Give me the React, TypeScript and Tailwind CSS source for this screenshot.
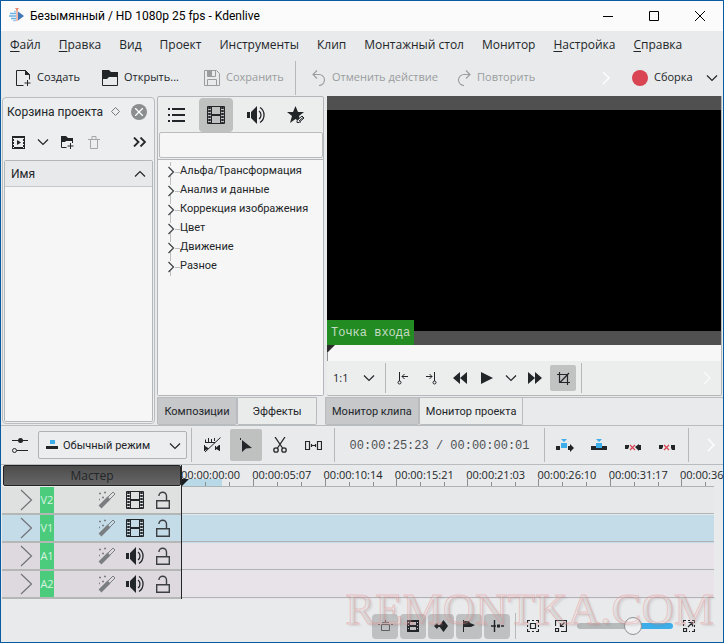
import { useState } from "react";
import type { ReactNode } from "react";

type IconProps = { w?: number; h?: number; children: ReactNode; className?: string };

function Icon({ w = 16, h = 16, children, className = "" }: IconProps) {
  return (
    <svg
      width={w}
      height={h}
      viewBox={`0 0 ${w} ${h}`}
      fill="none"
      stroke="currentColor"
      aria-hidden="true"
      className={`shrink-0 ${className}`}
    >
      {children}
    </svg>
  );
}

const ChevronDown = ({ className = "" }: { className?: string }) => (
  <Icon w={12} h={8} className={className}>
    <path d="M1 1.5l5 5 5-5" strokeWidth="1.2" />
  </Icon>
);

const ChevronRight = ({ className = "" }: { className?: string }) => (
  <Icon w={8} h={14} className={className}>
    <path d="M1 1l6 6-6 6" strokeWidth="1.4" />
  </Icon>
);

const AppLogo = () => (
  <Icon>
    <path d="M1 5.500h6M0 8h7M2 10.500h5" stroke="#6cb2e0" strokeWidth="1.600" />
    <path d="M5 3.500h2M4 12.500h3" stroke="#9fcbea" strokeWidth="1.400" />
    <path d="M9 3.500v9l6-4.500z" fill="#3f78b5" stroke="none" />
    <path d="M8 1v12" stroke="#eba08c" strokeWidth="1.400" />
    <path d="M6 0h4l-2 3z" fill="#e88b74" stroke="none" />
  </Icon>
);

const FileNew = () => (
  <Icon>
    <path d="M8.500 15.500h-7v-15h9l4 4v5M10.500.5v4h4" />
    <path d="M10 0l5 5h-5z" fill="currentColor" stroke="none" />
    <path d="M12.500 10v6M9.500 13h6" />
  </Icon>
);

const FolderOpen = () => (
  <Icon>
    <path d="M0 0h7l2 2h7v5H7L5 9H0z" fill="currentColor" stroke="none" />
    <path d="M.5 7v8.500h15V5" />
  </Icon>
);

const Save = () => (
  <Icon>
    <path d="M.5.5h12l3 3v12H.5z" />
    <path d="M3.500.5v6h8v-6M3.500 15.500v-6h9v6" />
    <path d="M4 1h4v5H4z" fill="currentColor" stroke="none" />
  </Icon>
);

const Undo = () => (
  <Icon w={14}>
    <path d="M1 4.500h6a5.500 5.500 0 0 1 0 11M5 .5l-4 4 4 4" strokeWidth="1.100" />
  </Icon>
);

const Redo = () => (
  <Icon w={14}>
    <path d="M13 4.500H7a5.500 5.500 0 0 0 0 11M9 .5l4 4-4 4" strokeWidth="1.100" />
  </Icon>
);

const ClipAdd = () => (
  <Icon w={13} h={13}>
    <path d="M1 1h11v11H1z" strokeWidth="2" />
    <path d="M1.500 2v10M11.500 2v10" stroke="#eceeef" strokeDasharray="1 2" />
    <path d="M5 4l4 2.500L5 9z" fill="currentColor" stroke="none" />
  </Icon>
);

const FolderAdd = () => (
  <Icon w={14} h={13}>
    <path d="M1 0h5l2 2h5v3H6L5 6H1z" fill="currentColor" stroke="none" />
    <path d="M1.500 1v10.500h5M12.500 3v4M10.500 7v6M7.500 10h6" />
  </Icon>
);

const Trash = () => (
  <Icon w={12} h={13}>
    <path d="M0 3.500h12M4 3V.5h4V3M2.500 4v8.500h7V4" />
  </Icon>
);

const DoubleChevron = () => (
  <Icon w={13} h={10}>
    <path d="M1 .5L5.500 5 1 9.500M7.500 .5L12 5 7.500 9.500" strokeWidth="1.800" />
  </Icon>
);

const ListIcon = () => (
  <Icon w={18}>
    <path d="M1 2h2M1 8h2M1 14h2" strokeWidth="2" />
    <path d="M5 2h13M5 8h13M5 14h13" strokeWidth="2" />
  </Icon>
);

const Film = () => (
  <Icon w={18} h={18}>
    <path d="M.5.5h17v17H.5z" />
    <path d="M2.500 1v16M15.500 1v16" strokeWidth="2.500" strokeDasharray="2 1" />
    <path d="M4.500.5v17M13.500.5v17" />
    <path d="M4 9h10" strokeWidth="2" />
  </Icon>
);

const FilmSmall = () => (
  <Icon w={12} h={12}>
    <path d="M1.500 0v12M10.500 0v12" strokeWidth="3" />
    <path d="M1.500 2v9M10.500 2v9" stroke="#bec0c1" strokeDasharray="1 2" />
    <path d="M3 1h6M3 6h6M3 11h6" strokeWidth="2" />
  </Icon>
);

const Speaker = () => (
  <Icon w={18} h={18}>
    <path d="M0 6h3v6H0zM4 6l6-6v18l-6-6z" fill="currentColor" stroke="none" />
    <path d="M12 5a5 5 0 0 1 0 8M13 1.500a9 9 0 0 1 0 15" strokeWidth="1.300" />
  </Icon>
);

const StarEdit = () => (
  <Icon w={20} h={18}>
    <path d="M8.500 0l2.500 6h6l-5 4 2 7-5.500-4L3 17l2-7L0 6h6z" fill="currentColor" stroke="none" />
    <path d="M10 16.500v-2l5-4.500 2 2-5 4.500z" fill="#eceded" />
    <path d="M12 15l4-3.500" />
  </Icon>
);

const MarkIn = () => (
  <Icon w={12} h={14}>
    <path d="M2.500 1v9M11 5.500H5M7.500 3L5 5.500 7.500 8" />
    <circle cx="2.500" cy="11.500" r="1.500" />
  </Icon>
);

const MarkOut = () => (
  <Icon w={12} h={14}>
    <path d="M9.500 1v9M1 5.500h6M4.500 3L7 5.500 4.500 8" />
    <circle cx="9.500" cy="11.500" r="1.500" />
  </Icon>
);

const Rewind = () => (
  <Icon w={14} h={12}>
    <path d="M7 0v12L0 6zM14 0v12L7 6z" fill="currentColor" stroke="none" />
  </Icon>
);

const Forward = () => (
  <Icon w={14} h={12}>
    <path d="M0 0v12l7-6zM7 0v12l7-6z" fill="currentColor" stroke="none" />
  </Icon>
);

const Play = () => (
  <Icon w={12} h={12}>
    <path d="M0 0v12l12-6z" fill="currentColor" stroke="none" />
  </Icon>
);

const Crop = () => (
  <Icon w={13} h={13}>
    <path d="M0 2.500h10.500V13M2.500 0v10.500H13M3 10.500L12 1" strokeWidth="1.200" />
  </Icon>
);

const Sliders = () => (
  <Icon>
    <path d="M0 3.500h16M5 13.500h11" />
    <circle cx="8.500" cy="3.500" r="2.500" fill="currentColor" stroke="none" />
    <circle cx="2.500" cy="13.500" r="2" />
  </Icon>
);

const ModeIcon = () => (
  <Icon w={12} h={9}>
    <path d="M4 0h5v4H4z" fill="#3daee9" stroke="none" />
    <path d="M0 6h12v3H0z" fill="currentColor" stroke="none" />
  </Icon>
);

const MixOff = () => (
  <Icon w={17} h={16}>
    <path d="M1.500 5V2.500M4.500 5V1M7.500 5V2M10.500 4V1M1 5.500h10M1 15L16.500.5" />
    <path d="M.5 8v6M15.500 8v6M11.500 9v4" />
    <path d="M1 9l4 2.500-4 2zM15 8l-4 3.500 4 2z" fill="currentColor" stroke="none" />
  </Icon>
);

const Pointer = () => (
  <Icon w={12} h={14}>
    <path d="M2 2l10 8-6 .5-4 3.500z" fill="currentColor" stroke="none" />
    <path d="M.5 0v2" />
  </Icon>
);

const Scissors = () => (
  <Icon w={16} h={16}>
    <path d="M3 0l7.500 11M13 0L5.500 11" strokeWidth="1.300" />
    <circle cx="4" cy="13" r="2.200" strokeWidth="1.300" />
    <circle cx="12" cy="13" r="2.200" strokeWidth="1.300" />
  </Icon>
);

const Spacer = () => (
  <Icon w={17} h={9}>
    <path d="M.5.5h4v8h-4zM12.500.5h4v8h-4zM7 4.500h3M6.500 3v3M10.500 3v3" strokeWidth="1.200" />
  </Icon>
);

const Insert = () => (
  <Icon w={18} h={13}>
    <path d="M0 7h4v4H0zM12 7h2V5l4 4-4 4v-2h-2z" fill="currentColor" stroke="none" />
    <path d="M5 4h6v5H5zM5 0h6L8 3z" fill="#3daee9" stroke="none" />
  </Icon>
);

const Overwrite = () => (
  <Icon w={16} h={13}>
    <path d="M0 7h16v4H0z" fill="currentColor" stroke="none" />
    <path d="M5 4h6v5H5zM5 0h6L8 3z" fill="#3daee9" stroke="none" />
  </Icon>
);

const Extract = () => (
  <Icon w={16} h={7}>
    <path d="M0 1h4v2L3 5H0zM10 3l4-3v1h2v5h-2v1z" fill="currentColor" stroke="none" />
    <path d="M5 1l5 5M10 1L5 6" stroke="#da4453" strokeWidth="1.200" />
  </Icon>
);

const Lift = () => (
  <Icon w={16} h={7}>
    <path d="M0 1h4v2L3 5H0zM12 1h4v5h-3l-1-2z" fill="currentColor" stroke="none" />
    <path d="M5 1l5 5M10 1L5 6" stroke="#da4453" strokeWidth="1.200" />
  </Icon>
);

const Wand = () => (
  <Icon w={18} h={18} className="text-[#7b7e81]">
    <path d="M2 16L11 7" strokeWidth="4" />
    <path d="M9.500 6.500L15 1l2 2-5.500 5.500z" />
    <path d="M1 2.500h2M6 1.500h2M4 6.500h2M1 8.500h1" strokeWidth="1.500" />
  </Icon>
);

const Unlock = () => (
  <Icon w={14} h={18} className="text-[#3d4043]">
    <path d="M.7 9.700h12.600v7.600H.7z" strokeWidth="1.400" />
    <path d="M10.500 9.500V5a3.800 3.800 0 0 0-7.600 0" strokeWidth="1.400" />
  </Icon>
);

const TrackBox = () => (
  <Icon w={15} h={12} className="text-[#5c6063]">
    <path d="M3.500 4.500h8v6h-8zM4 2.500h7M7.500 0v2M0 4.500h2M13 4.500h2" />
  </Icon>
);

const Keyframes = () => (
  <Icon w={14} h={12}>
    <path d="M9.500 0L14 6l-4.500 6L5 6zM3 3l2 3-2 3-3-3zM2 5h6v2H2z" fill="currentColor" stroke="none" />
  </Icon>
);

const Flag = () => (
  <Icon w={12} h={12}>
    <path d="M.5 0v12" />
    <path d="M1 1h5l1 2 5 2-4 2H1z" fill="currentColor" stroke="none" />
  </Icon>
);

const Snap = () => (
  <Icon w={13} h={12}>
    <path d="M3.500 0v12M0 6h5M10 6h3" strokeWidth="1.400" />
    <path d="M6 4.500h3v3H6z" fill="currentColor" stroke="none" />
  </Icon>
);

const FitZoom = () => (
  <Icon w={12} h={12}>
    <path
      d="M.5 3V.5H3M9 .5h2.500V3M11.500 9v2.500H9M3 11.500H.5V9M5 .5h2M5 11.500h2M.5 5v2M11.500 5v2"
      strokeWidth="1.200"
    />
    <path d="M3.500 3.500h5v5h-5z" strokeWidth="1.200" />
  </Icon>
);

const ZoomOut = () => (
  <Icon w={12} h={12}>
    <path d="M.5 6V.5h11v11H6M.5 8.500h3v3h-3zM9.500 2.500l-4 4M5.500 3v3.500H9" strokeWidth="1.200" />
  </Icon>
);

const ZoomIn = () => (
  <Icon w={12} h={12}>
    <path
      d="M.5 6V4M.5 2.500V.5H3M5 .5h2M9 .5h2.500V3M11.500 5v2M11.500 9v2.500H9M7 11.500H6M.5 8.500h3v3h-3zM5 7l4-4M5.500 2.500h4v4"
      strokeWidth="1.200"
    />
  </Icon>
);

const Separator = ({ className = "" }: { className?: string }) => (
  <div className={`w-px shrink-0 bg-[#b6b9bb] ${className}`} />
);

const menu: [string, boolean][] = [
  ["Файл", true],
  ["Правка", true],
  ["Вид", false],
  ["Проект", false],
  ["Инструменты", false],
  ["Клип", false],
  ["Монтажный стол", false],
  ["Монитор", false],
  ["Настройка", true],
  ["Справка", true],
];

const categories = [
  "Альфа/Трансформация",
  "Анализ и данные",
  "Коррекция изображения",
  "Цвет",
  "Движение",
  "Разное",
];

const tracks = [
  { name: "V2", video: true, head: "bg-[#dfe0e0]", body: "bg-[#e6e8e9]" },
  { name: "V1", video: true, head: "bg-[#c4dce8]", body: "bg-[#c4dce8]" },
  { name: "A1", video: false, head: "bg-[#ded9df]", body: "bg-[#e7e3e8]" },
  { name: "A2", video: false, head: "bg-[#ded9df]", body: "bg-[#e7e3e8]" },
];

const marks = [
  "00:00:00:00",
  "00:00:05:07",
  "00:00:10:14",
  "00:00:15:21",
  "00:00:21:03",
  "00:00:26:10",
  "00:00:31:17",
  "00:00:36",
];

function TitleBar() {
  return (
    <header className="flex h-[30px] items-center bg-[#fbfbfb] pl-2 font-[Roboto,sans-serif] text-[12px] text-black">
      <AppLogo />
      <h1 className="ml-[5px] grow whitespace-nowrap">Безымянный / HD 1080p 25 fps - Kdenlive</h1>
      <button aria-label="Свернуть" className="flex w-[46px] justify-center">
        <Icon w={10} h={10}>
          <path d="M0 5.500h10" />
        </Icon>
      </button>
      <button aria-label="Развернуть" className="flex w-[46px] justify-center">
        <Icon w={10} h={10}>
          <path d="M.5.5h9v9h-9z" />
        </Icon>
      </button>
      <button aria-label="Закрыть" className="flex w-[46px] justify-center">
        <Icon w={10} h={10}>
          <path d="M0 0l10 10M10 0L0 10" />
        </Icon>
      </button>
    </header>
  );
}

function MenuBar() {
  return (
    <nav className="flex h-[29px] items-center gap-[18px] pb-[2px] pl-[9px] text-[12px]">
      {menu.map(([label, mnemonic]) => (
        <button key={label} className="whitespace-nowrap">
          {mnemonic ? <span className="underline underline-offset-2">{label[0]}</span> : label[0]}
          {label.slice(1)}
        </button>
      ))}
    </nav>
  );
}

function MainToolbar() {
  return (
    <div className="flex h-[35px] items-center pl-[14px] text-[11px]">
      <button className="flex w-[87px] items-center gap-[6px] whitespace-nowrap">
        <FileNew /> Создать
      </button>
      <button className="flex w-[102px] items-center gap-[6px] whitespace-nowrap">
        <FolderOpen /> Открыть...
      </button>
      <button className="flex w-[91px] items-center gap-[6px] whitespace-nowrap text-[#9a9c9e]">
        <Save /> Сохранить
      </button>
      <Separator className="h-[34px]" />
      <button className="ml-4 flex w-[145px] items-center gap-[6px] whitespace-nowrap text-[#9a9c9e]">
        <Undo /> Отменить действие
      </button>
      <button className="flex items-center gap-[6px] whitespace-nowrap text-[#9a9c9e]">
        <Redo /> Повторить
      </button>
      <div className="grow" />
      <ChevronRight className="mr-[22px] text-white" />
      <button className="flex items-center gap-[6px] pr-[5px]">
        <span className="size-4 rounded-full bg-[#d94553]" />
        <span className="w-[46px] text-left">Сборка</span>
        <ChevronDown />
      </button>
    </div>
  );
}

function ProjectBin() {
  return (
    <section className="mr-[2px] flex w-[153px] shrink-0 flex-col rounded-sm border border-[#bbbec0] bg-[#eceeef] p-px font-[Roboto,sans-serif]">
      <div className="flex h-[25px] items-center pl-[3px] text-[12px]">
        <h2 className="grow whitespace-nowrap">Корзина проекта</h2>
        <button aria-label="Открепить панель" className="mr-[11px] text-[#777a7c]">
          <Icon w={9} h={9}>
            <path d="M4.500 .5l4 4-4 4-4-4z" />
          </Icon>
        </button>
        <button
          aria-label="Закрыть панель"
          className="mr-[6px] flex size-4 items-center justify-center rounded-full bg-[#8b8e90] text-white"
        >
          <Icon w={8} h={8}>
            <path d="M0 0l8 8M8 0L0 8" strokeWidth="1.300" />
          </Icon>
        </button>
      </div>
      <div className="flex h-9 items-center pl-2">
        <button aria-label="Добавить клип">
          <ClipAdd />
        </button>
        <button aria-label="Варианты добавления" className="ml-3">
          <ChevronDown />
        </button>
        <button aria-label="Создать папку" className="ml-[11px]">
          <FolderAdd />
        </button>
        <button aria-label="Удалить" className="ml-[14px] text-[#a4a7a9]">
          <Trash />
        </button>
        <div className="grow" />
        <button aria-label="Ещё" className="mr-[7px]">
          <DoubleChevron />
        </button>
      </div>
      <div className="flex grow flex-col rounded-xs border border-[#b4b7b9] bg-[#f6f6f6]">
        <button className="flex h-[26px] items-center justify-between border-b border-[#c6c9cb] bg-[#e8e9ea] px-[6px] text-[12px]">
          Имя
          <ChevronDown className="rotate-180" />
        </button>
      </div>
    </section>
  );
}

function Tab({ label, active, onClick }: { label: string; active: boolean; onClick: () => void }) {
  return (
    <button
      role="tab"
      aria-selected={active}
      onClick={onClick}
      className={`h-7 min-w-20 rounded-b-xs border border-[#b9bcbe] px-[6px] pt-[2px] font-[Roboto,sans-serif] text-[11px] whitespace-nowrap ${
        active ? "bg-[#c6c8ca]" : "bg-[#eaecec]"
      }`}
    >
      {label}
    </button>
  );
}

function Compositions() {
  const [tab, setTab] = useState(0);
  return (
    <section className="mr-[3px] flex w-[167px] shrink-0 flex-col">
      <div className="flex grow flex-col rounded-xs border border-[#b4b7b9] bg-[#eceeee]">
        <div className="flex h-[35px] items-center pl-px text-[#232629]">
          <button aria-label="Список" className="flex size-[34px] items-center justify-center">
            <ListIcon />
          </button>
          <button
            aria-label="Видео"
            className="ml-[6px] flex size-[34px] items-center justify-center rounded-sm bg-[#bfc1c1]"
          >
            <Film />
          </button>
          <button aria-label="Аудио" className="ml-[6px] flex size-[34px] items-center justify-center">
            <Speaker />
          </button>
          <button aria-label="Избранное" className="ml-[7px] flex size-[34px] items-center justify-center">
            <StarEdit />
          </button>
        </div>
        <input
          aria-label="Поиск"
          className="mb-px ml-px h-[26px] rounded-xs border border-[#b9bcbe] bg-[#f6f6f6] px-1 text-[11px] outline-none"
        />
        <ul className="grow border-t border-[#b4b7b9] bg-[#f6f6f6] pt-[2px] pl-[10px] font-[Roboto,sans-serif] text-[11px]">
          {categories.map((name) => (
            <li key={name} className="flex h-[19px] items-center">
              <button className="flex items-center whitespace-nowrap">
                <Icon w={12} h={19} className="text-[#3c3f41]">
                  <path d="M2.500 0v4M2.500 14v5M7 10.500h5" stroke="#bcbec0" />
                  <path d="M.5 5l5 5-5 5" strokeWidth="1.200" />
                </Icon>
                {name}
              </button>
            </li>
          ))}
        </ul>
      </div>
      <div role="tablist" className="mt-px flex">
        <Tab label="Композиции" active={tab === 0} onClick={() => setTab(0)} />
        <div className="flex grow pr-2 [&>button]:grow">
          <Tab label="Эффекты" active={tab === 1} onClick={() => setTab(1)} />
        </div>
      </div>
    </section>
  );
}

function Monitor() {
  const [tab, setTab] = useState(0);
  return (
    <section className="flex min-w-0 grow flex-col">
      <div className="mr-px flex grow flex-col rounded-b-xs border-r border-b border-[#b4b7b9] bg-[#eceeee]">
        <div className="flex min-h-[220px] grow flex-col border-y-[14px] border-[#505050] bg-black">
          <div className="grow" />
          <div className="-mb-[14px] flex h-[25px] items-center self-start bg-[#228b22] px-1 pt-px font-['Liberation_Mono',monospace] text-[12px] text-[#c4dcc4]">
            Точка входа
          </div>
        </div>
        <div className="h-4 bg-[#f7f7f7]">
          <Icon w={8} h={16} className="text-[#2b2b2b]">
            <path d="M0 0h8L0 8z" fill="currentColor" stroke="none" />
            <path d="M.5 8v8" stroke="#8c8f91" />
          </Icon>
        </div>
        <div className="flex h-[34px] items-center pl-[6px] text-[11px] text-[#232629]">
          <button className="flex items-center">
            <span className="w-[30px] text-left">1:1</span>
            <ChevronDown />
          </button>
          <Separator className="ml-[10px] h-[30px]" />
          <button aria-label="Точка входа" className="ml-[11px]">
            <MarkIn />
          </button>
          <button aria-label="Точка выхода" className="ml-4">
            <MarkOut />
          </button>
          <button aria-label="Назад" className="ml-4">
            <Rewind />
          </button>
          <button aria-label="Воспроизвести" className="ml-[14px]">
            <Play />
          </button>
          <button aria-label="Варианты воспроизведения" className="ml-3">
            <ChevronDown />
          </button>
          <button aria-label="Вперёд" className="ml-[11px]">
            <Forward />
          </button>
          <button
            aria-label="Кадрирование"
            className="ml-2 flex size-[26px] items-center justify-center rounded-xs bg-[#c1c3c3]"
          >
            <Crop />
          </button>
          <Separator className="ml-[5px] h-[30px]" />
          <div className="grow" />
          <ChevronRight className="mr-[10px] text-[#f8f8f8]" />
        </div>
      </div>
      <div
        role="tablist"
        className="mt-px -ml-[2px] flex border-t border-[#b9bcbe] [&>button]:h-[27px] [&>button]:border-t-0"
      >
        <Tab label="Монитор клипа" active={tab === 0} onClick={() => setTab(0)} />
        <Tab label="Монитор проекта" active={tab === 1} onClick={() => setTab(1)} />
      </div>
    </section>
  );
}

function TimelineToolbar() {
  return (
    <div className="flex h-[40px] items-center border-y border-[#b9bcbe] pl-[11px] text-[#232629]">
      <button aria-label="Параметры дорожек">
        <Sliders />
      </button>
      <div className="relative ml-[10px] w-[149px] shrink-0">
        <select
          aria-label="Режим правки"
          className="h-7 w-full appearance-none rounded-xs border border-[#b0b3b5] bg-[#ebedee] pt-[2px] pl-6 font-[Roboto,sans-serif] text-[11px] outline-none"
        >
          <option>Обычный режим</option>
          <option>Режим замены</option>
          <option>Режим вставки</option>
        </select>
        <span className="pointer-events-none absolute top-[9px] left-2">
          <ModeIcon />
        </span>
        <ChevronDown className="pointer-events-none absolute top-[11px] right-[6px]" />
      </div>
      <Separator className="ml-1 h-[34px]" />
      <button aria-label="Смешать клипы" className="ml-3">
        <MixOff />
      </button>
      <button
        aria-label="Выделение"
        className="ml-[9px] flex size-8 items-center justify-center rounded-xs bg-[#bfc1c1]"
      >
        <Pointer />
      </button>
      <button aria-label="Разрезать" className="ml-[10px]">
        <Scissors />
      </button>
      <button aria-label="Раздвинуть" className="ml-[17px]">
        <Spacer />
      </button>
      <Separator className="ml-3 h-[34px]" />
      <output className="w-[209px] pt-[2px] text-center font-['Liberation_Mono',monospace] text-[12px] whitespace-nowrap text-[#4d5053]">
        00:00:25:23 / 00:00:00:01
      </output>
      <Separator className="h-[34px]" />
      <button aria-label="Вставить" className="ml-[11px]">
        <Insert />
      </button>
      <button aria-label="Перезаписать" className="ml-[17px]">
        <Overwrite />
      </button>
      <button aria-label="Извлечь" className="ml-[18px] pt-1">
        <Extract />
      </button>
      <button aria-label="Поднять" className="ml-[18px] pt-1">
        <Lift />
      </button>
      <Separator className="ml-[13px] h-[34px]" />
      <div className="grow" />
      <ChevronRight className="mr-[8px] text-white" />
    </div>
  );
}

function Timeline() {
  return (
    <section className="flex pl-px">
      <div className="flex w-[179px] shrink-0 flex-col">
        <button className="mb-px ml-px h-[21px] rounded-xs border border-[#232323] bg-linear-to-b from-[#4c4c4c] to-[#676767] text-[12px] leading-[19px] text-[#232629]">
          Мастер
        </button>
        {tracks.map((t) => (
          <div key={t.name} className={`flex h-7 items-center border-b-2 border-[#b5b7b7] ${t.head}`}>
            <button aria-label={`Развернуть ${t.name}`} className="ml-[18px] text-[#707376]">
              <Icon w={13} h={22}>
                <path d="M1 1l10.500 10L1 21" strokeWidth="1.200" />
              </Icon>
            </button>
            <span className="ml-[7px] w-[14px] self-stretch bg-[#4bcb7c] text-center text-[11px] leading-[26px] text-[#d6f3e0]">
              {t.name}
            </span>
            <button aria-label={`Эффекты ${t.name}`} className="ml-11">
              <Wand />
            </button>
            <button aria-label={`${t.video ? "Видео" : "Звук"} ${t.name}`} className="ml-[10px] text-[#232629]">
              {t.video ? <Film /> : <Speaker />}
            </button>
            <button aria-label={`Заблокировать ${t.name}`} className="ml-3">
              <Unlock />
            </button>
          </div>
        ))}
      </div>
      <div className="mr-[9px] flex min-w-0 grow flex-col border-l border-[#232629]">
        <div className="flex h-[22px] border-b border-[#b0b3b4] text-[11px] leading-[20px]">
          {marks.map((m, i) => (
            <div
              key={m}
              className={`flex flex-col whitespace-nowrap ${i < 7 ? "min-w-0 flex-1" : "w-[33px] shrink-0"}`}
            >
              <span className="-ml-px h-[14px]">{m}</span>
              <div
                className={`flex h-[7px] items-end ${
                  i === 0 ? "bg-linear-to-r from-[#b7d9e8] from-56% to-transparent to-56%" : ""
                }`}
              >
                {i === 0 ? (
                  <Icon w={7} h={7}>
                    <path d="M0 0h7L0 7z" fill="#1b1e20" stroke="none" />
                  </Icon>
                ) : (
                  <span className="h-[7px] w-px bg-[#8d9092]" />
                )}
                <span className={`${i === 0 ? "ml-4" : "ml-[23px]"} h-1 w-px bg-[#8d9092]`} />
                {i < 7 && <span className="ml-[23px] h-1 w-px bg-[#8d9092]" />}
              </div>
            </div>
          ))}
        </div>
        {tracks.map((t) => (
          <div key={t.name} className={`h-7 pb-px ${t.body}`}>
            <div className="h-[27px] border-b border-[#b0b3b4]" />
          </div>
        ))}
      </div>
    </section>
  );
}

function BottomBar() {
  const [zoom, setZoom] = useState(60);
  const tools: [string, ReactNode][] = [
    ["Цвета дорожек", <TrackBox />],
    ["Показывать кадры", <FilmSmall />],
    ["Показывать звук", <Keyframes />],
    ["Показывать метки", <Flag />],
    ["Прилипание", <Snap />],
  ];
  return (
    <footer className="flex h-[43px] items-center justify-end pt-[11px] pr-[28px] text-[#232629]">
      <div className="flex gap-[2px]">
        {tools.map(([label, icon]) => (
          <button
            key={label}
            aria-label={label}
            className="flex h-[25px] w-[26px] items-center justify-center rounded-sm bg-[#bec0c1]"
          >
            {icon}
          </button>
        ))}
      </div>
      <Separator className="ml-[5px] h-[26px]" />
      <button aria-label="Вместить проект" className="ml-[11px]">
        <FitZoom />
      </button>
      <button aria-label="Отдалить" className="ml-4">
        <ZoomOut />
      </button>
      <input
        type="range"
        aria-label="Масштаб"
        value={zoom}
        onChange={(e) => setZoom(Number(e.target.value))}
        className="mx-[10px] h-[6px] w-[96px] appearance-none rounded-full bg-[linear-gradient(to_right,#b7babb_58%,#3daee9_58%)] [&::-webkit-slider-thumb]:size-[18px] [&::-webkit-slider-thumb]:appearance-none [&::-webkit-slider-thumb]:rounded-full [&::-webkit-slider-thumb]:border [&::-webkit-slider-thumb]:border-[#8f9294] [&::-webkit-slider-thumb]:bg-[#eff0f1]"
      />
      <button aria-label="Приблизить">
        <ZoomIn />
      </button>
    </footer>
  );
}

export default function App() {
  return (
    <div className="relative flex min-h-screen flex-col overflow-hidden border border-[#0a5ba0] bg-[#e8eaeb] font-['Open_Sans','Noto_Sans',sans-serif] text-[#232629]">
      <TitleBar />
      <MenuBar />
      <MainToolbar />
      <main className="flex grow pt-px pl-px">
        <div className="flex pt-px pb-px">
          <ProjectBin />
        </div>
        <Compositions />
        <Monitor />
      </main>
      <TimelineToolbar />
      <Timeline />
      <BottomBar />
      <div className="pointer-events-none absolute right-[9px] bottom-[5px] font-['Liberation_Serif',serif] text-[45px] leading-[56px] text-[#f6e2e2]/15 [-webkit-text-stroke:1px_rgba(230,140,140,0.42)] [text-shadow:2px_2px_2px_rgba(120,120,120,0.2)]">
        REMONTKA.COM
      </div>
    </div>
  );
}
